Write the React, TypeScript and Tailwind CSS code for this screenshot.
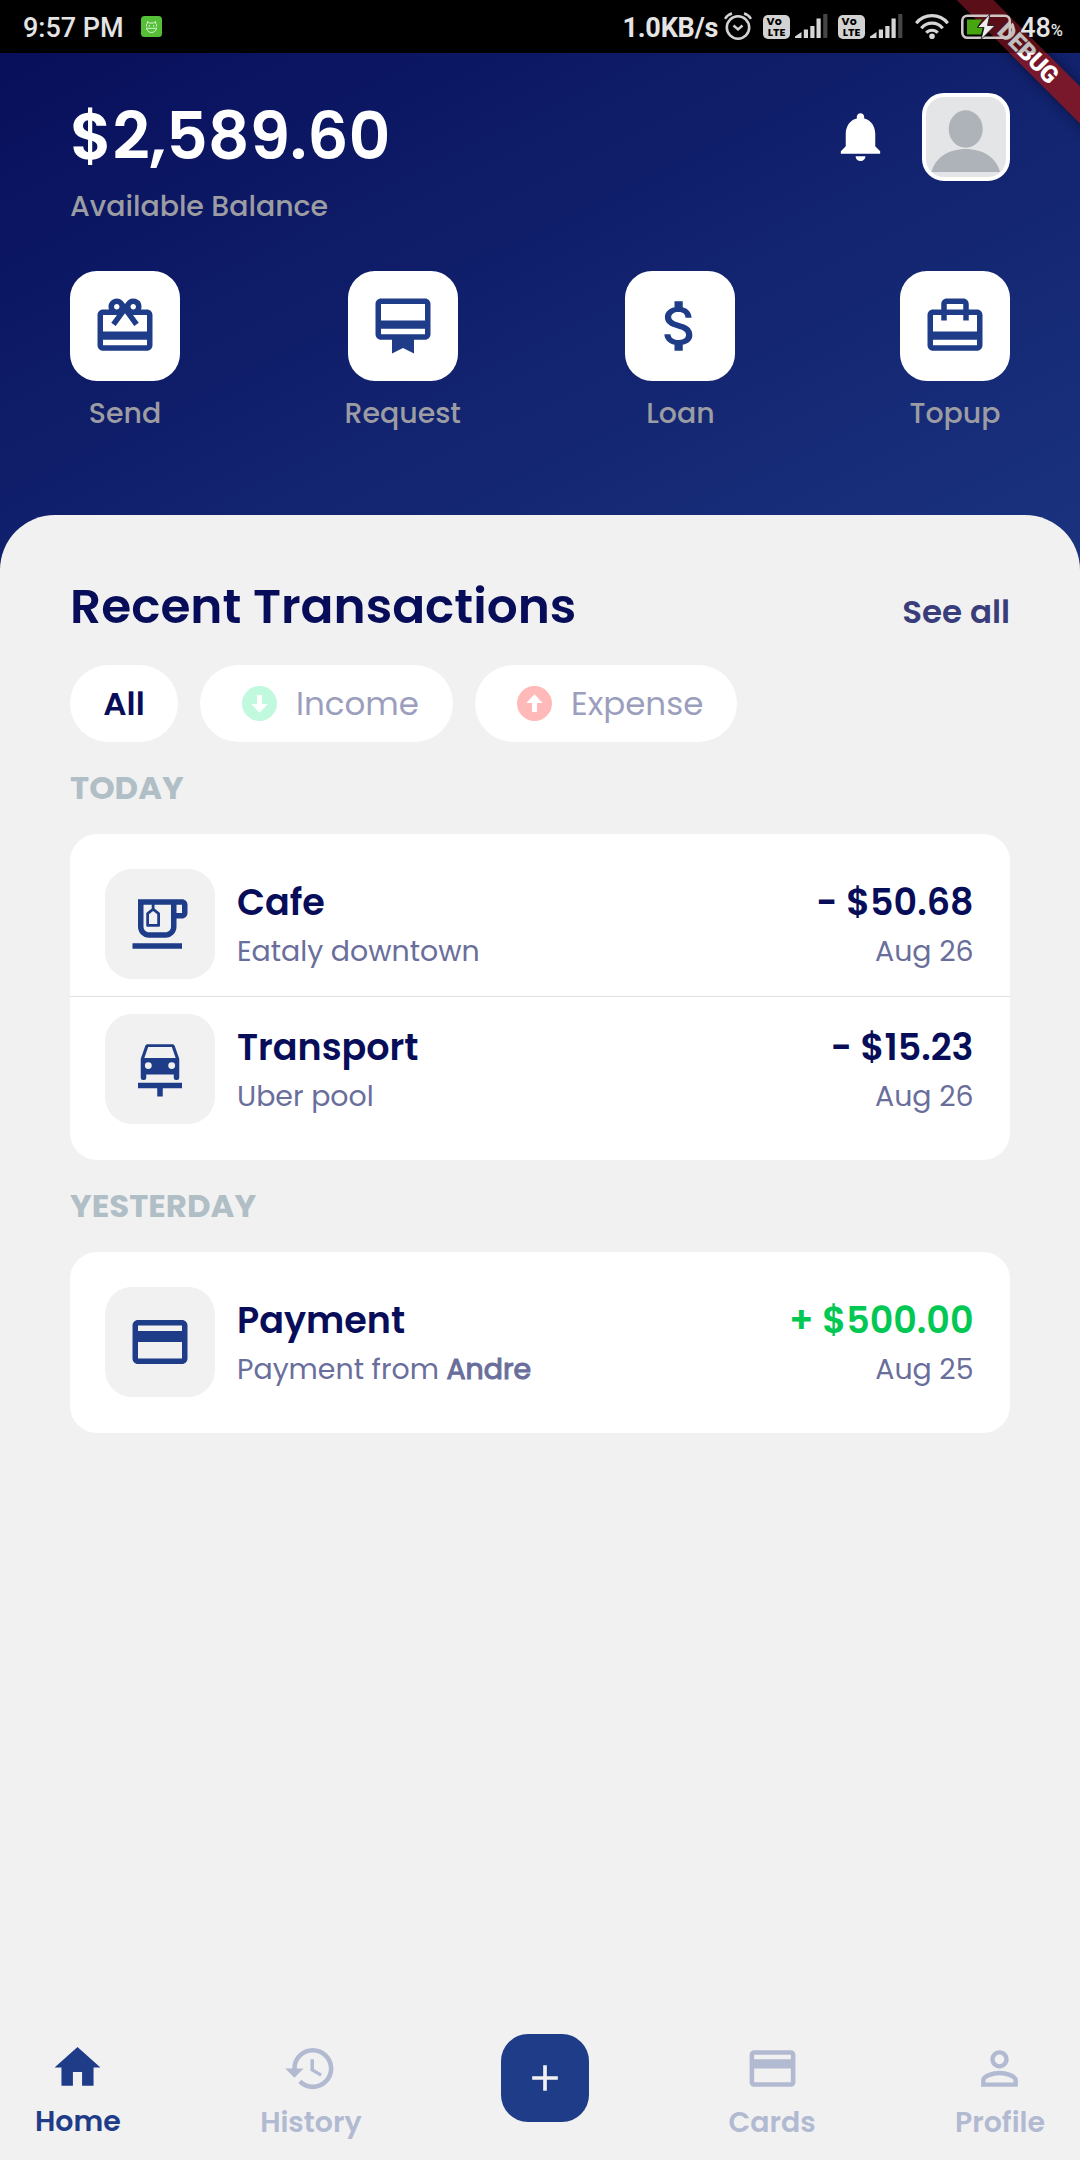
import type { ComponentType, ReactNode } from "react";
import {
  MdAdd,
  MdAttachMoney,
  MdCardMembership,
  MdCardTravel,
  MdHistory,
  MdHome,
  MdNotifications,
  MdOutlineEmojiFoodBeverage,
  MdPayment,
  MdPersonOutline,
  MdRedeem,
} from "react-icons/md";

type Icon = ComponentType<{ size?: number; color?: string }>;

function CarLift({ size = 24, color = "currentColor" }: { size?: number; color?: string }) {
  return (
    <svg width={size} height={size} viewBox="0 0 24 24" fill={color} fillRule="evenodd">
      <path d="M5 8.300L6.600 3.700C6.800 3.200 7.100 3 7.600 3h8.800c.5 0 .8.200 1 .7L19 8.300V15.200a.8.8 0 0 1-.8.8h-.4a.8.8 0 0 1-.8-.8V14H7v1.200a.8.8 0 0 1-.8.8h-.4a.8.8 0 0 1-.8-.8zM7.700 4L6.300 8h11.400L16.300 4zM7.750 9.500a1.250 1.250 0 1 0 0 2.500 1.250 1.250 0 0 0 0-2.500zM16.250 9.500a1.250 1.250 0 1 0 0 2.500 1.250 1.250 0 0 0 0-2.500z" />
      <path d="M4 17h16v2h-7v3h-2v-3H4z" />
    </svg>
  );
}

function Signal() {
  return (
    <svg width="33" height="25" viewBox="0 0 33 25">
      <path d="M0 24v-1.500L6.500 18v6zM8.800 24v-8.500h4.200V24zM15.300 24V12h4.200v12zM21.500 24V4.500h4.200V24z" fill="#d6d6d6" />
      <path d="M28.200 24V0h4.200v24z" fill="#454545" />
    </svg>
  );
}

function VoLte() {
  return (
    <span className="flex h-6 w-[27px] flex-col items-center justify-center rounded-[5px] bg-[#d2d2d2] font-['Poppins','Inter',sans-serif] text-[11px] font-bold leading-[10.500px] text-black">
      <span className="-ml-[5px]">Vo</span>
      <span>LTE</span>
    </span>
  );
}

function StatusBar() {
  return (
    <div className="flex h-[53px] items-center bg-black font-['Roboto','Inter',sans-serif] font-medium text-[#e4e4e4]">
      <span className="relative z-30 ml-[23px] mt-[3px] w-[118px] text-[27px] leading-none">9:57 PM</span>
      <svg width="21" height="21" viewBox="0 0 21 21" className="relative z-30">
        <rect width="21" height="21" rx="3.500" fill="#56bf38" />
        <path d="M5.500 10.500V8.500L6.500 7V5.500L8.500 7h4l2-1.500V7l1 1.500v2M5 12.300h11M5.500 12.500c.6 2.300 2.600 4 5 4s4.400-1.700 5-4" fill="none" stroke="#d9f3d0" strokeWidth="1" />
        <path d="M7.800 9.800h1.200M12 9.800h1.200" stroke="#e9f9e4" strokeWidth="1.200" />
      </svg>
      <div className="relative z-30 ml-auto mr-[17px] flex items-center">
        <span className="mt-[3px] text-[27px] font-bold leading-none tracking-[-0.2px]">1.0KB/s</span>
        <svg width="28" height="29" viewBox="0 0 28 29" className="ml-[6px]" fill="none" stroke="#d2d2d2">
          <circle cx="14" cy="15.500" r="11.200" strokeWidth="2.600" />
          <path d="M9.500 13.500l4.500 4 4.500-4" strokeWidth="2.400" />
          <path d="M1 6.800C2.500 4.200 5 2.300 8 1.500M27 6.800C25.500 4.200 23 2.300 20 1.500" strokeWidth="2.400" />
        </svg>
        <span className="ml-[11px]"><VoLte /></span>
        <span className="ml-[5px]"><Signal /></span>
        <span className="ml-[10px]"><VoLte /></span>
        <span className="ml-[5px]"><Signal /></span>
        <svg width="34" height="26" viewBox="0 0 34 26" className="ml-3" fill="none" stroke="#d6d6d6" strokeWidth="3.200">
          <path d="M1.200 9.200C9.500-.8 24.500-.8 32.800 9.200" />
          <path d="M6.300 14.200c5.700-6.700 15.700-6.700 21.400 0" />
          <path d="M11.300 18.800c3-3.400 8.400-3.400 11.400 0" />
          <circle cx="17" cy="22.300" r="2.800" fill="#d6d6d6" stroke="none" />
        </svg>
        <svg width="55" height="26" viewBox="0 0 55 26" className="ml-[12px]">
          <rect x="1.300" y="1.800" width="47.500" height="22" rx="5" fill="none" stroke="#cfc6c6" strokeWidth="2.600" />
          <path d="M51 8.500c3 1.500 3 7.500 0 9z" fill="#cfc6c6" />
          <path d="M6 5.500h15l-5 8h6l-2 7H6z" fill="#47a50f" />
          <path d="M29 0L16.500 13.500H23L20 25.500 34 11.500h-7.500z" fill="#eee" stroke="#111" strokeWidth=".8" />
        </svg>
        <span className="ml-[4px] mt-[3px] text-[27px] leading-none">48</span>
        <span className="mt-[9px] text-[16.500px] leading-none">%</span>
      </div>
    </div>
  );
}

/* Corner ribbon, dimmed where the system bar covers it. */
function DebugRibbon() {
  return (
    <>
      <div className="pointer-events-none absolute right-0 top-0 z-10 size-[140px] overflow-hidden">
        <div className="absolute left-[-12px] top-[40px] flex h-[26px] w-[200px] rotate-45 items-center justify-center bg-[#861724]/90 shadow-[0_0_12px_rgba(0,0,0,0.45)]">
          <span className="font-['Roboto','Inter',sans-serif] text-[24px] font-black leading-none tracking-[-0.5px] text-white">DEBUG</span>
        </div>
      </div>
      <div className="pointer-events-none absolute right-0 top-0 z-20 h-[53px] w-[140px] bg-black/25" />
    </>
  );
}

function Avatar() {
  return (
    <div className="size-[88px] overflow-hidden rounded-[22px] border-[4.500px] border-white bg-[#e4e5e7]">
      <svg width="79" height="79" viewBox="0 0 79 79" fill="#adb3b8">
        <ellipse cx="39.700" cy="32" rx="17" ry="18.700" />
        <path d="M5.500 75C9 61 22 52 39.700 52S70.500 61 74 75z" />
      </svg>
    </div>
  );
}

const actions: { label: string; icon: Icon }[] = [
  { label: "Send", icon: MdRedeem },
  { label: "Request", icon: MdCardMembership },
  { label: "Loan", icon: MdAttachMoney },
  { label: "Topup", icon: MdCardTravel },
];

function Header() {
  return (
    <header className="px-[70px] pb-[82px] pt-[39.500px]">
      <div className="flex justify-between">
        <div className="pt-[8.500px]">
          <div className="text-[65px] font-semibold leading-[72px] tracking-[-0.1px] text-white">$2,589.60</div>
          <div className="mt-[11.500px] text-[28.400px] font-medium leading-[42px] text-[#9c9ca3]">Available Balance</div>
        </div>
        <div className="flex h-[88px] items-center gap-[32px]">
          <MdNotifications size={59} color="#ffffff" />
          <Avatar />
        </div>
      </div>
      <div className="mt-[44px] flex justify-between">
        {actions.map(({ label, icon: Icon }) => (
          <div key={label} className="flex flex-col items-center">
            <div className="flex size-[110px] items-center justify-center rounded-[27px] bg-white">
              <Icon size={66} color="#1f3c88" />
            </div>
            <span className="mt-[12.500px] text-[28.400px] font-medium leading-[40px] text-[#9c9ca3]">{label}</span>
          </div>
        ))}
      </div>
    </header>
  );
}

function ArrowDot({ color, up }: { color: string; up?: boolean }) {
  return (
    <svg width="35" height="35" viewBox="0 0 35 35" className={up ? "rotate-180" : ""}>
      <circle cx="17.500" cy="17.500" r="17.500" fill={color} />
      <path d="M15 9h5v9h5.700l-8.200 8.700L9.300 18H15z" fill="#fff" />
    </svg>
  );
}

function Filters() {
  return (
    <div className="mt-[28.500px] flex gap-[22px] text-[32.500px] leading-[77px] text-[#9c9ebd]">
      <button className="h-[77px] w-[108px] rounded-full bg-white font-semibold text-[#070d59]">All</button>
      <button className="flex h-[77px] w-[253px] items-center gap-[19px] rounded-full bg-white pl-[42px]">
        <ArrowDot color="#c1f9de" />
        Income
      </button>
      <button className="flex h-[77px] w-[262px] items-center gap-[19px] rounded-full bg-white pl-[42px]">
        <ArrowDot color="#ffb9b9" up />
        Expense
      </button>
    </div>
  );
}

interface RowProps {
  icon: Icon;
  title: string;
  detail: ReactNode;
  amount: string;
  date: string;
  income?: boolean;
}

function Row({ icon: Icon, title, detail, amount, date, income }: RowProps) {
  return (
    <div className="flex pl-[35px] pr-[36.500px]">
      <div className="flex size-[110px] items-center justify-center rounded-[27px] bg-[#f1f1f1]">
        <Icon size={66} color="#1f3c88" />
      </div>
      <div className="ml-[22px] flex-1 pt-[10px]">
        <div className="text-[36.500px] font-semibold leading-[48px] text-[#070d59]">{title}</div>
        <div className="mt-[4px] text-[28.400px] leading-[40px] text-[#6a6e9b]">{detail}</div>
      </div>
      <div className="pt-[10px] text-right">
        <div className={income ? "text-[36.500px] font-semibold leading-[48px] text-[#00c853]" : "text-[36.500px] font-semibold leading-[48px] text-[#070d59]"}>{amount}</div>
        <div className="mt-[4px] text-[28.400px] leading-[40px] text-[#6a6e9b]">{date}</div>
      </div>
    </div>
  );
}

function Section({ title, children }: { title: string; children: ReactNode }) {
  return (
    <section className="mt-[26px]">
      <h2 className="text-[32.400px] font-bold leading-[40px] text-[#b0bec5]">{title}</h2>
      <div className="mt-[26.500px] rounded-[27px] bg-white pb-[35.500px] pt-[35px]">{children}</div>
    </section>
  );
}

function Tab({ icon: Icon, label, active }: { icon: Icon; label: string; active?: boolean }) {
  return (
    <div className={active ? "-mt-px flex flex-col items-center text-[#1f3c88]" : "flex flex-col items-center text-[#b2bad2]"}>
      <Icon size={55} />
      <span className="mt-[9px] text-[28.400px] font-semibold leading-[34px]">{label}</span>
    </div>
  );
}

function BottomNav() {
  return (
    <nav className="mt-auto flex h-[126px] justify-between px-[35px]">
      <div className="pt-[7px]"><Tab icon={MdHome} label="Home" active /></div>
      <div className="pt-[7px]"><Tab icon={MdHistory} label="History" /></div>
      <button className="flex size-[88px] items-center justify-center rounded-[27px] bg-[#1f3c88]">
        <MdAdd size={44} color="#f1f1f1" />
      </button>
      <div className="pt-[7px]"><Tab icon={MdPayment} label="Cards" /></div>
      <div className="pt-[7px]"><Tab icon={MdPersonOutline} label="Profile" /></div>
    </nav>
  );
}

export default function App() {
  return (
    <div className="relative flex h-[2160px] w-[1080px] flex-col overflow-hidden bg-[linear-gradient(153.4deg,#070d59_0%,#1f3c88_50%)] font-['Poppins','Inter',sans-serif]">
      <StatusBar />
      <Header />
      <main className="flex flex-1 flex-col rounded-t-[55px] bg-[#f1f1f1]">
        <div className="px-[70px] pt-[61px]">
          <div className="flex items-end justify-between">
            <h1 className="text-[48.600px] font-semibold leading-[60px] text-[#070d59]">Recent Transactions</h1>
            <span className="text-[32.500px] font-semibold leading-[48px] text-[#393d7a]">See all</span>
          </div>
          <Filters />
          <Section title="TODAY">
            <Row icon={MdOutlineEmojiFoodBeverage} title="Cafe" detail="Eataly downtown" amount="- $50.68" date="Aug 26" />
            <div className="my-[17px] h-px bg-[#e0e0e0]" />
            <Row icon={CarLift} title="Transport" detail="Uber pool" amount="- $15.23" date="Aug 26" />
          </Section>
          <Section title="YESTERDAY">
            <Row
              icon={MdPayment}
              title="Payment"
              detail={<>Payment from <span className="[-webkit-text-stroke:1.100px_#6a6e9b]">Andre</span></>}
              amount="+ $500.00"
              date="Aug 25"
              income
            />
          </Section>
        </div>
        <BottomNav />
      </main>
      <DebugRibbon />
    </div>
  );
}
